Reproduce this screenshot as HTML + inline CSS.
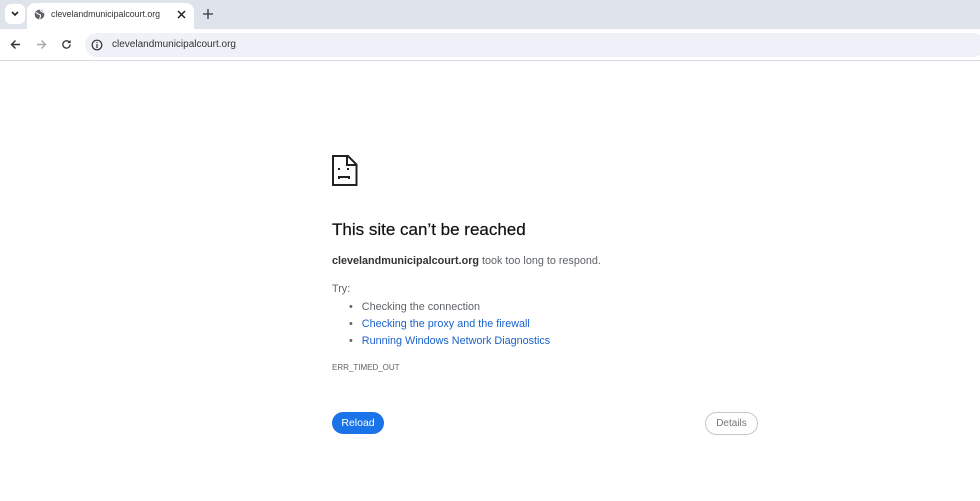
<!DOCTYPE html>
<html><head><style>
*{margin:0;padding:0;box-sizing:border-box}
body{width:980px;height:501px;overflow:hidden;background:#fff;font-family:"Liberation Sans",sans-serif;position:relative}
.tabbar{position:absolute;left:0;top:0;width:980px;height:29px;background:#dfe3eb}
.tab{position:absolute;left:27px;top:3px;width:167px;height:26px;background:#fff;border-radius:8px 8px 0 0}
.toolbar{position:absolute;left:0;top:29px;width:980px;height:32px;background:#fff;border-bottom:1px solid #d6d9de}
.omni{position:absolute;left:85px;top:4px;width:900px;height:24px;background:#eef1f8;border-radius:12px}
.t{position:absolute;white-space:nowrap}
a{color:#1a62c8;text-decoration:none}
</style></head><body>
<div class="tabbar">
 <div style="position:absolute;left:5px;top:4px;width:20px;height:20px;background:#fff;border-radius:6px"></div>
 <svg style="position:absolute;left:9px;top:9px" width="12" height="10"><path d="M3 3l3 3 3-3" stroke="#222" stroke-width="1.6" fill="none"/></svg>
 <div class="tab"></div>
 <svg style="position:absolute;left:34px;top:9px" width="11" height="11" viewBox="0 0 12 12"><circle cx="6" cy="6" r="5.3" fill="#5f6368"/><path d="M2 4c2 0 2 2 4 2s1 3 0 5M7 1c0 2 2 2 4 3" stroke="#fff" stroke-width="1.2" fill="none"/></svg>
 <div class="t" style="left:51px;top:9px;font-size:8.8px;color:#333">clevelandmunicipalcourt.org</div>
 <svg style="position:absolute;left:177px;top:10px" width="9" height="9"><path d="M1 1l7 7M8 1l-7 7" stroke="#222" stroke-width="1.5"/></svg>
 <svg style="position:absolute;left:203px;top:9px" width="10" height="10"><path d="M5 0v10M0 5h10" stroke="#333" stroke-width="1.3"/></svg>
</div>
<div class="toolbar">
 <svg style="position:absolute;left:10px;top:10px" width="11" height="11"><path d="M10 5.5H1.5M5.5 1.5l-4 4 4 4" stroke="#333" stroke-width="1.4" fill="none"/></svg>
 <svg style="position:absolute;left:36px;top:10px" width="11" height="11"><path d="M1 5.5h8.5M5.5 1.5l4 4-4 4" stroke="#aaa" stroke-width="1.4" fill="none"/></svg>
 <svg style="position:absolute;left:61px;top:10px" width="11" height="11" viewBox="0 0 12 12"><path d="M10 6a4 4 0 1 1-1.3-3" stroke="#333" stroke-width="1.4" fill="none"/><path d="M10.5 1v3.5H7z" fill="#333"/></svg>
 <div class="omni"></div>
 <svg style="position:absolute;left:91px;top:10px" width="12" height="12"><circle cx="6" cy="6" r="4.8" stroke="#333" stroke-width="1.2" fill="none"/><path d="M6 5v4M6 3v1" stroke="#333" stroke-width="1.2"/></svg>
 <div class="t" style="left:112px;top:10px;font-size:10px;color:#333">clevelandmunicipalcourt.org</div>
</div>
<svg style="position:absolute;left:332px;top:155px" width="26" height="31" viewBox="0 0 26 31">
<path d="M1 1h15l8.5 8.5V30H1z" fill="none" stroke="#222" stroke-width="2"/>
<path d="M15 1v9h9.5" fill="none" stroke="#222" stroke-width="2"/>
<rect x="6" y="13" width="2" height="2" fill="#222"/><rect x="15" y="13" width="2" height="2" fill="#222"/>
<path d="M7 24v-2h10v2" fill="none" stroke="#222" stroke-width="2"/>
</svg>
<div class="t" style="left:332px;top:220px;font-size:17px;color:#111;-webkit-text-stroke:0.2px #111">This site can’t be reached</div>
<div class="t" style="left:332px;top:255px;font-size:10.8px;color:#5f6368"><b style="color:#333">clevelandmunicipalcourt.org</b> took too long to respond.</div>
<div class="t" style="left:332px;top:283px;font-size:10.8px;color:#5f6368">Try:</div>
<div class="t" style="left:349px;top:299px;font-size:10.8px;color:#5f6368;line-height:17px">
• &nbsp;&nbsp;Checking the connection<br>• &nbsp;&nbsp;<a>Checking the proxy and the firewall</a><br>• &nbsp;&nbsp;<a>Running Windows Network Diagnostics</a></div>
<div class="t" style="left:332px;top:363px;font-size:8px;color:#5f6368">ERR_TIMED_OUT</div>
<div class="t" style="left:332px;top:412px;width:52px;height:22px;border-radius:11px;background:#1a73e8;color:#fff;font-size:10.5px;text-align:center;line-height:22px">Reload</div>
<div class="t" style="left:705px;top:412px;width:53px;height:23px;border-radius:12px;border:1px solid #c4c7cc;color:#777;font-size:10px;text-align:center;line-height:21px">Details</div>
</body></html>
